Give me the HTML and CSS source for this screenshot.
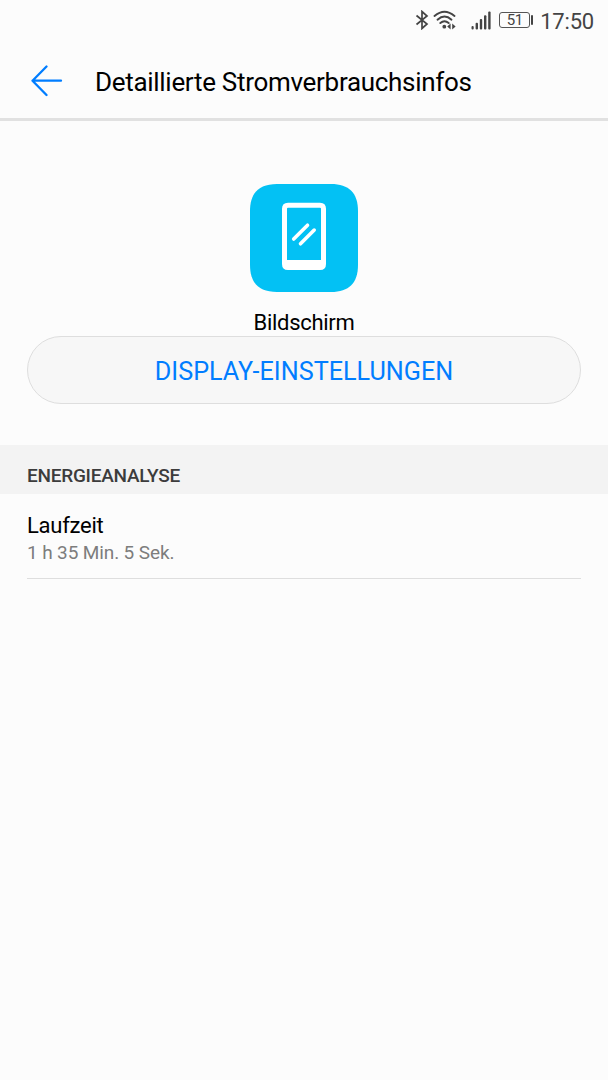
FILE: index.html
```html
<!DOCTYPE html>
<html lang="de">
<head>
    <meta charset="UTF-8">
    <meta name="viewport" content="width=device-width, initial-scale=1.0">
    <title>Detaillierte Stromverbrauchsinfos</title>
    <link rel="stylesheet" href="styles.css">
</head>
<body>

<div class="status-bar">
    <svg class="bluetooth" width="14" height="20" viewBox="0 0 14 20">
        <path d="M1.5 5.5 L12 14 L7 18.5 V1.5 L12 6 L1.5 14.5"/>
    </svg>
    <svg class="wifi" width="24" height="20" viewBox="0 0 24 20">
        <path d="M1.5 6 Q11.5 -2.6 21.5 6"/>
        <path d="M4.5 9.7 Q11.5 3.3 18.5 9.7"/>
        <path d="M7.3 13 Q11.5 9.3 15.7 13"/>
        <circle cx="11.3" cy="16.7" r="1.9"/>
        <path class="solid" d="M14.2 16.5 L17.6 13.6 V19.4 Z M22.6 16.5 L19.2 13.6 V19.4 Z"/>
    </svg>
    <svg class="signal" width="20" height="19" viewBox="0 0 20 19">
        <rect x="0.5" y="15" width="2.2" height="3.5" rx="1"/>
        <rect x="4.6" y="11.7" width="2.4" height="6.8" rx="1"/>
        <rect x="8.8" y="8" width="2.4" height="10.5" rx="1"/>
        <rect x="13" y="4.3" width="2.4" height="14.2" rx="1"/>
        <rect x="17.2" y="0.5" width="2.4" height="18" rx="1"/>
    </svg>
    <div class="battery">51</div>
    <div class="clock">17:50</div>
</div>

<div class="header">
    <svg class="back" width="32" height="32" viewBox="0 0 32 32">
        <path d="M15.5 1.5 L1.5 15.7 L15.5 30 M1.5 15.7 H30"/>
    </svg>
    <h1>Detaillierte Stromverbrauchsinfos</h1>
</div>

<div class="app-info">
    <svg width="108" height="108" viewBox="0 0 108 108">
        <path fill="#03c1f4" d="M27 0 H81 C99 0 108 9 108 27 V81 C108 99 99 108 81 108 H27 C9 108 0 99 0 81 V27 C0 9 9 0 27 0 Z"/>
        <path fill="#fff" fill-rule="evenodd" d="M38 18.7 H70 Q76 18.7 76 24.7 V80 Q76 86 70 86 H38 Q32 86 32 80 V24.7 Q32 18.7 38 18.7 Z M38 23.7 Q37 23.7 37 24.7 V76 H71 V24.7 Q71 23.7 70 23.7 Z"/>
        <path stroke="#fff" stroke-width="3.6" stroke-linecap="round" d="M43.7 55 L57.5 41.2 M50.5 59.8 L64.2 46.1"/>
    </svg>
    <div class="app-name">Bildschirm</div>
    <button class="settings-btn">DISPLAY-EINSTELLUNGEN</button>
</div>

<h2>ENERGIEANALYSE</h2>

<div class="entry">
    <div class="entry-title">Laufzeit</div>
    <div class="entry-value">1 h 35 Min. 5 Sek.</div>
</div>

</body>
</html>
```
FILE: styles.css
```css
/* General Styles */
body {
    font-family: Roboto, sans-serif;
    margin: 0;
    background-color: #fcfcfc;
    color: #000;
}

svg {
    display: block;
    flex-shrink: 0;
    fill: none;
}

/* Status Bar */
.status-bar {
    display: flex;
    align-items: center;
    justify-content: flex-end;
    height: 40px;
    padding-right: 14px;
    color: #444;
}

.bluetooth {
    stroke: #444;
    stroke-width: 1.7;
    margin-right: 4px;
}

.wifi {
    stroke: #444;
    stroke-width: 1.9;
    stroke-linecap: round;
    margin-right: 14px;
}

.wifi circle,
.wifi .solid {
    fill: #444;
    stroke: none;
}

.signal {
    fill: #444;
    margin-right: 8px;
}

.battery {
    position: relative;
    box-sizing: border-box;
    width: 31px;
    height: 16px;
    border: 1px solid #555;
    border-radius: 3px;
    font-size: 15px;
    letter-spacing: -0.4px;
    line-height: 15px;
    text-align: center;
    margin-right: 10px;
}

.battery::after {
    content: '';
    position: absolute;
    top: 2px;
    right: -4px;
    width: 2px;
    height: 10px;
    border-radius: 1px;
    background-color: #444;
}

.clock {
    font-size: 22px;
    letter-spacing: -0.2px;
    line-height: 40px;
    padding-top: 4px;
}

/* Header */
.header {
    display: flex;
    align-items: center;
    height: 78px;
    padding: 0 31px;
    border-bottom: 3px solid #e1e1e1;
}

.back {
    stroke: #007dff;
    stroke-width: 2.3;
    stroke-linecap: round;
    stroke-linejoin: round;
    margin: 4px 32px 0 0;
}

h1 {
    margin: 6px 0 0;
    font-size: 26px;
    font-weight: 400;
    letter-spacing: -0.3px;
    line-height: 30px;
    white-space: nowrap;
}

/* App Info */
.app-info {
    display: flex;
    flex-direction: column;
    align-items: center;
    padding: 63px 27px 41px;
}

.app-name {
    margin-top: 17px;
    font-size: 22px;
    letter-spacing: -0.3px;
    line-height: 27px;
}

.settings-btn {
    width: 554px;
    height: 68px;
    padding: 2px 0 0;
    border: 1px solid #dedede;
    border-radius: 34px;
    background-color: #f7f7f7;
    color: #007dff;
    font-family: inherit;
    font-size: 25.2px;
}

/* Energy Section */
h2 {
    box-sizing: border-box;
    height: 49px;
    margin: 0;
    padding: 12px 27px 0;
    background-color: #f3f3f3;
    color: #3c3c3c;
    font-size: 19px;
    font-weight: 500;
    letter-spacing: -0.25px;
    line-height: 38px;
}

.entry {
    margin: 0 27px;
    padding: 18px 0 13px;
    border-bottom: 1px solid #dedede;
}

.entry-title {
    font-size: 22px;
    letter-spacing: -0.25px;
    line-height: 27px;
}

.entry-value {
    margin-top: 1px;
    color: #7d7d7d;
    font-size: 19px;
    letter-spacing: -0.12px;
    line-height: 25px;
}
```
